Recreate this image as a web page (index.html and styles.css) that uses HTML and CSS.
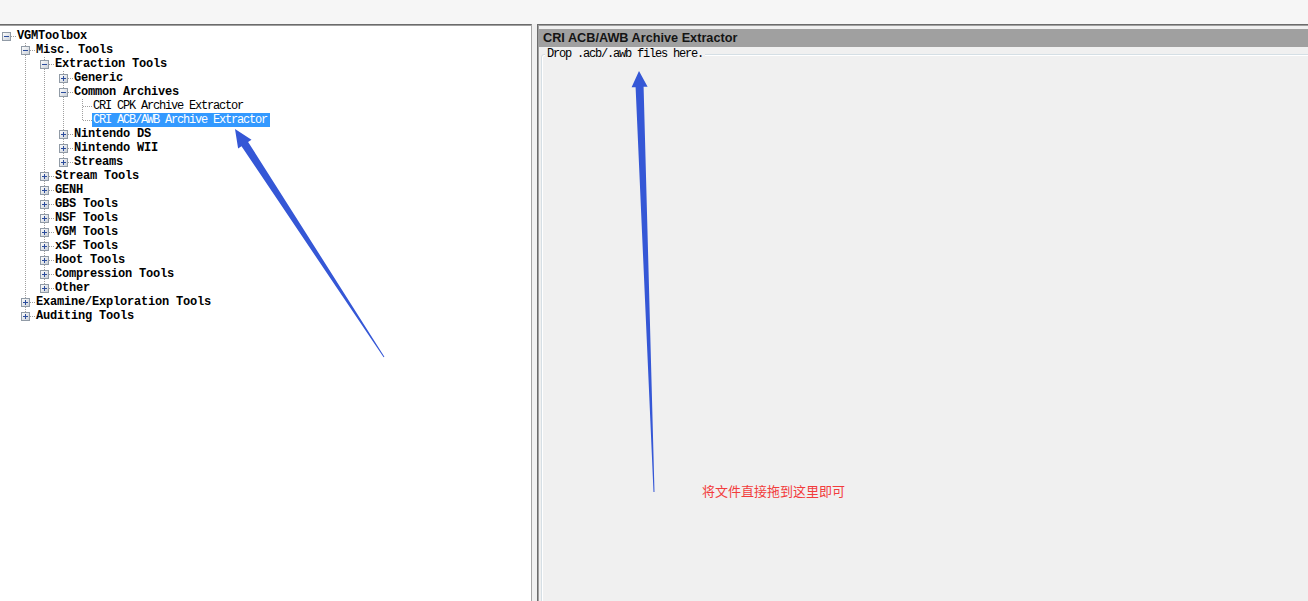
FILE: index.html
```html
<!DOCTYPE html>
<html lang="en">
<head>
<meta charset="utf-8">
<title>VGMToolbox</title>
<link rel="stylesheet" href="styles.css">
</head>
<body>
<svg class="defs" width="0" height="0" aria-hidden="true">
  <defs>
    <linearGradient id="boxfill" x1="0" y1="0" x2="1" y2="1">
      <stop offset="0" stop-color="#ffffff"/>
      <stop offset="1" stop-color="#c8ced6"/>
    </linearGradient>
    <symbol id="minus" viewBox="0 0 9 9">
      <rect x="0.5" y="0.5" width="8" height="8" fill="url(#boxfill)" stroke="#919ba6"/>
      <path d="M2 4.5h5" stroke="#2c4d9c" stroke-width="1"/>
    </symbol>
    <symbol id="plus" viewBox="0 0 9 9">
      <rect x="0.5" y="0.5" width="8" height="8" fill="url(#boxfill)" stroke="#919ba6"/>
      <path d="M2 4.5h5M4.5 2v5" stroke="#2c4d9c" stroke-width="1"/>
    </symbol>
  </defs>
</svg>
<div class="app">
  <div class="topbar"></div>
  <div class="main">
    <div class="left">
      <div class="tree">
        <div class="row"><span class="node root"><svg class="box" width="9" height="9"><use href="#minus"/></svg></span><span class="label">VGMToolbox</span></div>
        <div class="row"><span class="g"></span><span class="node mid"><svg class="box" width="9" height="9"><use href="#minus"/></svg></span><span class="label">Misc. Tools</span></div>
        <div class="row"><span class="g"></span><span class="g v"></span><span class="node mid"><svg class="box" width="9" height="9"><use href="#minus"/></svg></span><span class="label">Extraction Tools</span></div>
        <div class="row"><span class="g"></span><span class="g v"></span><span class="g v"></span><span class="node mid"><svg class="box" width="9" height="9"><use href="#plus"/></svg></span><span class="label">Generic</span></div>
        <div class="row"><span class="g"></span><span class="g v"></span><span class="g v"></span><span class="node mid"><svg class="box" width="9" height="9"><use href="#minus"/></svg></span><span class="label">Common Archives</span></div>
        <div class="row"><span class="g"></span><span class="g v"></span><span class="g v"></span><span class="g v"></span><span class="node mid"></span><span class="label leaf">CRI CPK Archive Extractor</span></div>
        <div class="row"><span class="g"></span><span class="g v"></span><span class="g v"></span><span class="g v"></span><span class="node last"></span><span class="label leaf selected">CRI ACB/AWB Archive Extractor</span></div>
        <div class="row"><span class="g"></span><span class="g v"></span><span class="g v"></span><span class="node mid"><svg class="box" width="9" height="9"><use href="#plus"/></svg></span><span class="label">Nintendo DS</span></div>
        <div class="row"><span class="g"></span><span class="g v"></span><span class="g v"></span><span class="node mid"><svg class="box" width="9" height="9"><use href="#plus"/></svg></span><span class="label">Nintendo WII</span></div>
        <div class="row"><span class="g"></span><span class="g v"></span><span class="g v"></span><span class="node last"><svg class="box" width="9" height="9"><use href="#plus"/></svg></span><span class="label">Streams</span></div>
        <div class="row"><span class="g"></span><span class="g v"></span><span class="node mid"><svg class="box" width="9" height="9"><use href="#plus"/></svg></span><span class="label">Stream Tools</span></div>
        <div class="row"><span class="g"></span><span class="g v"></span><span class="node mid"><svg class="box" width="9" height="9"><use href="#plus"/></svg></span><span class="label">GENH</span></div>
        <div class="row"><span class="g"></span><span class="g v"></span><span class="node mid"><svg class="box" width="9" height="9"><use href="#plus"/></svg></span><span class="label">GBS Tools</span></div>
        <div class="row"><span class="g"></span><span class="g v"></span><span class="node mid"><svg class="box" width="9" height="9"><use href="#plus"/></svg></span><span class="label">NSF Tools</span></div>
        <div class="row"><span class="g"></span><span class="g v"></span><span class="node mid"><svg class="box" width="9" height="9"><use href="#plus"/></svg></span><span class="label">VGM Tools</span></div>
        <div class="row"><span class="g"></span><span class="g v"></span><span class="node mid"><svg class="box" width="9" height="9"><use href="#plus"/></svg></span><span class="label">xSF Tools</span></div>
        <div class="row"><span class="g"></span><span class="g v"></span><span class="node mid"><svg class="box" width="9" height="9"><use href="#plus"/></svg></span><span class="label">Hoot Tools</span></div>
        <div class="row"><span class="g"></span><span class="g v"></span><span class="node mid"><svg class="box" width="9" height="9"><use href="#plus"/></svg></span><span class="label">Compression Tools</span></div>
        <div class="row"><span class="g"></span><span class="g v"></span><span class="node last"><svg class="box" width="9" height="9"><use href="#plus"/></svg></span><span class="label">Other</span></div>
        <div class="row"><span class="g"></span><span class="node mid"><svg class="box" width="9" height="9"><use href="#plus"/></svg></span><span class="label">Examine/Exploration Tools</span></div>
        <div class="row"><span class="g"></span><span class="node last"><svg class="box" width="9" height="9"><use href="#plus"/></svg></span><span class="label">Auditing Tools</span></div>
      </div>
    </div>
    <div class="right">
      <div class="header">CRI ACB/AWB Archive Extractor</div>
      <fieldset class="group">
        <legend class="legend">Drop .acb/.awb files here.</legend>
      </fieldset>
    </div>
  </div>

  <svg class="overlay" width="1308" height="601" viewBox="0 0 1308 601" aria-hidden="true">
    <polygon class="arrow" points="235,129 251.5,139.7 248.1,141.9 384.4,356.7 383.6,357.3 241.5,146.3 238.1,148.5"/>
    <polygon class="arrow" points="639,71 647.6,86.7 643.6,86.8 654.5,492 653.5,492 635.6,87.2 631.6,87.3"/>
  </svg>
  <div class="note">将文件直接拖到这里即可</div>
</div>
</body>
</html>
```

FILE: styles.css
```css
html, body {
  margin: 0;
  padding: 0;
}

body {
  width: 1308px;
  height: 601px;
  overflow: hidden;
  background: #f0f0f0;
  font-family: "Liberation Mono", "DejaVu Sans Mono", monospace;
}

.defs {
  display: block;
  width: 0;
  height: 0;
  overflow: hidden;
}

.app {
  position: relative;
  width: 1308px;
  height: 601px;
  overflow: hidden;
}

.topbar {
  height: 24px;
  background: #f6f6f6;
}

.main {
  display: flex;
  height: 577px;
}

.left {
  width: 532px;
  flex-shrink: 0;
  box-sizing: border-box;
  background: #ffffff;
  border-top: 1px solid #6b6b6b;
  border-right: 1px solid #a6a6a6;
  box-shadow: inset 0 1px 0 #a0a0a0;
  padding-top: 4px;
}

.tree {
  display: flex;
  flex-direction: column;
}

.row {
  display: flex;
  height: 14px;
  line-height: 14px;
  font-size: 12px;
  color: #000;
  white-space: nowrap;
}

.g {
  width: 19px;
  height: 14px;
  flex-shrink: 0;
}

.g.v {
  background: repeating-linear-gradient(to bottom, #a0a0a0 0 1px, transparent 1px 2px) 6px 0 / 1px 14px no-repeat;
}

.node {
  width: 16px;
  height: 14px;
  flex-shrink: 0;
  display: flex;
  align-items: flex-start;
}

.node.root {
  background: repeating-linear-gradient(to right, #a0a0a0 0 1px, transparent 1px 2px) 7px 7px / 9px 1px no-repeat;
}

.node.mid {
  background:
    repeating-linear-gradient(to bottom, #a0a0a0 0 1px, transparent 1px 2px) 6px 0 / 1px 14px no-repeat,
    repeating-linear-gradient(to right, #a0a0a0 0 1px, transparent 1px 2px) 7px 7px / 9px 1px no-repeat;
}

.node.last {
  background:
    repeating-linear-gradient(to bottom, #a0a0a0 0 1px, transparent 1px 2px) 6px 0 / 1px 8px no-repeat,
    repeating-linear-gradient(to right, #a0a0a0 0 1px, transparent 1px 2px) 7px 7px / 9px 1px no-repeat;
}

.box {
  display: block;
  width: 9px;
  height: 9px;
  margin: 3px 0 0 2px;
}

.label {
  padding: 0 3px 0 1px;
  font-weight: bold;
  letter-spacing: -0.2px;
}

.label.leaf {
  font-weight: normal;
  letter-spacing: -1.2px;
}

.label.selected {
  background: #3399ff;
  color: #ffffff;
}

.right {
  margin-left: 5px;
  width: 800px;
  flex-shrink: 0;
  box-sizing: border-box;
  background: #f0f0f0;
  border-top: 1px solid #6b6b6b;
  border-left: 1px solid #6b6b6b;
  box-shadow: inset 1px 1px 0 #a0a0a0;
  padding: 4px 0 0 1px;
}

.header {
  height: 18px;
  line-height: 18px;
  background: #a0a0a0;
  padding-left: 4px;
  font-family: "Liberation Sans", Arial, sans-serif;
  font-weight: bold;
  font-size: 12.7px;
  color: #141414;
}

.group {
  margin: 0 0 0 2px;
  padding: 0 0 0 3px;
  height: 560px;
  border: 1px solid #d5dfe5;
  border-radius: 3px;
  box-shadow: inset 1px 1px 0 #ffffff;
  min-width: 0;
}

.legend {
  padding: 0 2px;
  font-size: 12px;
  line-height: 14px;
  letter-spacing: -1.2px;
  color: #000;
  background: #f0f0f0;
}

.overlay {
  position: absolute;
  left: 0;
  top: 0;
  pointer-events: none;
}

.arrow {
  fill: #3557d6;
}

.note {
  position: absolute;
  left: 702px;
  top: 484px;
  font-family: "Noto Sans CJK SC", "Noto Sans", sans-serif;
  font-size: 13px;
  line-height: 13px;
  color: #f23c3c;
  white-space: nowrap;
}
```
